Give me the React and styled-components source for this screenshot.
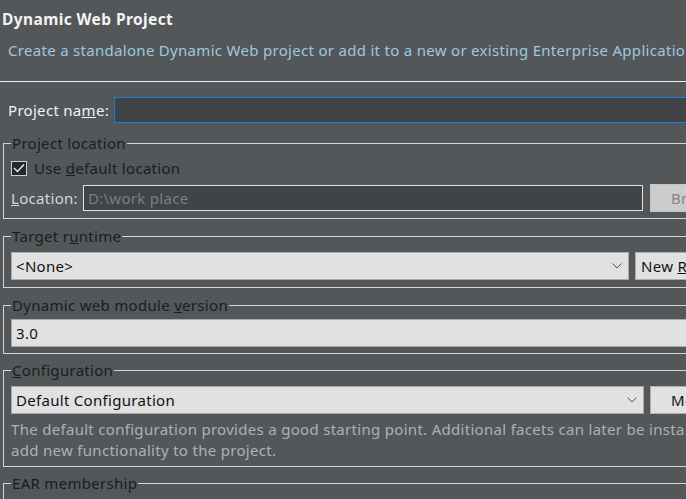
import React from "react";
import styled, { createGlobalStyle } from "styled-components";

const Global = createGlobalStyle`
  html, body { margin: 0; padding: 0; background: #53575a; overflow: hidden; }
  body { font-family: "Noto Sans", "Open Sans", sans-serif; font-size: 15px; letter-spacing: 0.3px; }
  * { box-sizing: border-box; }
`;

const Page = styled.div`
  width: 686px;
  height: 499px;
  overflow: hidden;
  background: #53575a;
`;

const Inner = styled.div`
  width: 800px;
`;

const Header = styled.div`
  height: 82px;
  padding-top: 8px;
  border-bottom: 1px solid #f2f2f2;
`;

const Title = styled.div`
  padding-left: 2px;
  height: 22px;
  line-height: 22px;
  font-weight: bold;
  font-size: 15.5px;
  letter-spacing: 0.4px;
  color: #f4f4f4;
`;

const Desc = styled.div`
  margin-top: 10px;
  padding-left: 8px;
  line-height: 20px;
  color: #9fc7df;
  white-space: nowrap;
`;

const NameRow = styled.div`
  margin-top: 15px;
  display: grid;
  grid-template-columns: 106px 1fr;
  align-items: center;
  padding-left: 8px;
`;

const Label = styled.span`
  color: ${(p) => (p.$disabled ? "#d6d6d6" : "#f2f2f2")};
  white-space: nowrap;
`;

const TextInput = styled.div`
  height: ${(p) => p.$h || 26}px;
  width: ${(p) => (p.$w ? p.$w + "px" : "auto")};
  flex: none;
  border: 1px solid ${(p) => p.$border};
  background: #404447;
  color: #7b7f82;
  line-height: ${(p) => (p.$h || 26) - 2}px;
  padding-left: 4px;
  white-space: nowrap;
`;

const Group = styled.fieldset`
  margin: ${(p) => p.$mt}px 0 0 3px;
  width: 790px;
  border: 1px solid #d4d4d4;
  padding: 0 7px ${(p) => p.$pb}px 7px;
`;

const Legend = styled.legend`
  padding: 0 1px;
  margin-left: 0;
  line-height: 20px;
  height: 20px;
  color: #1c1c1c;
  white-space: nowrap;
`;

const Row = styled.div`
  display: flex;
  align-items: center;
  gap: ${(p) => p.$gap || 6}px;
  margin-top: ${(p) => p.$mt}px;
  height: ${(p) => p.$h}px;
`;

const Check = styled.span`
  width: 16px;
  height: 15px;
  flex: none;
  border: 1px solid #cfcfcf;
  background: #25292c;
  display: flex;
  align-items: center;
  justify-content: center;
`;

const CheckText = styled.span`
  color: #1c1c1c;
`;

const Combo = styled.div`
  height: 28px;
  width: ${(p) => (p.$w ? p.$w + "px" : "100%")};
  flex: none;
  border: 1px solid #a9a9a9;
  background: #e1e1e1;
  color: #111;
  display: flex;
  align-items: center;
  justify-content: space-between;
  padding: 0 6px 0 4px;
  white-space: nowrap;
`;

const Button = styled.div`
  height: 28px;
  width: 110px;
  flex: none;
  margin-left: ${(p) => p.$ml || 0}px;
  border: 1px solid ${(p) => (p.$disabled ? "#c4c4c4" : "#adadad")};
  background: ${(p) => (p.$disabled ? "#cccccc" : "#e1e1e1")};
  color: ${(p) => (p.$disabled ? "#858585" : "#111")};
  line-height: 26px;
  padding-left: ${(p) => p.$pl}px;
  white-space: nowrap;
`;

const Hint = styled.div`
  margin-top: 5px;
  line-height: 21px;
  color: #aab2b8;
  white-space: nowrap;
`;

const Chevron = () => (
  <svg width="10" height="6" viewBox="0 0 10 6">
    <path d="M0.5 0.5 L5 5 L9.5 0.5" fill="none" stroke="#555" strokeWidth="1" />
  </svg>
);

const CheckMark = () => (
  <svg width="12" height="10" viewBox="0 0 12 10">
    <path d="M1 5 L4.5 8.5 L11 1.5" fill="none" stroke="#eeeeee" strokeWidth="1.4" />
  </svg>
);

export default function App() {
  return (
    <>
      <Global />
      <Page>
        <Inner>
          <Header>
            <Title>Dynamic Web Project</Title>
            <Desc>
              Create a standalone Dynamic Web project or add it to a new or existing Enterprise Application.
            </Desc>
          </Header>

          <NameRow>
            <Label>
              Project na<u>m</u>e:
            </Label>
            <TextInput $border="#1b7fd6" />
          </NameRow>

          <Group $mt={10} $pb={6}>
            <Legend>Project location</Legend>
            <Row $mt={4} $h={22} $gap={7}>
              <Check>
                <CheckMark />
              </Check>
              <CheckText>
                Use <u>d</u>efault location
              </CheckText>
            </Row>
            <Row $mt={5} $h={28} $gap={5}>
              <Label $disabled>
                <u>L</u>ocation:
              </Label>
              <TextInput $border="#e2e2e2" $w={560} $h={26}>
                D:\work place
              </TextInput>
              <Button $disabled $pl={20} $ml={2}>
                Browse...
              </Button>
            </Row>
          </Group>

          <Group $mt={7} $pb={7}>
            <Legend>
              Target r<u>u</u>ntime
            </Legend>
            <Row $mt={6} $h={28}>
              <Combo $w={618}>
                <span>&lt;None&gt;</span>
                <Chevron />
              </Combo>
              <Button $pl={5}>
                New <u>R</u>untime...
              </Button>
            </Row>
          </Group>

          <Group $mt={7} $pb={6}>
            <Legend>
              Dynamic web module <u>v</u>ersion
            </Legend>
            <Row $mt={4} $h={28}>
              <Combo>
                <span>3.0</span>
              </Combo>
            </Row>
          </Group>

          <Group $mt={6} $pb={5}>
            <Legend>
              <u>C</u>onfiguration
            </Legend>
            <Row $mt={6} $h={28}>
              <Combo $w={633}>
                <span>Default Configuration</span>
                <Chevron />
              </Combo>
              <Button $pl={20}>Modify...</Button>
            </Row>
            <Hint>
              The default configuration provides a good starting point. Additional facets can later be installed to
              <br />
              add new functionality to the project.
            </Hint>
          </Group>

          <Group $mt={6} $pb={40}>
            <Legend>EAR membership</Legend>
          </Group>
        </Inner>
      </Page>
    </>
  );
}
